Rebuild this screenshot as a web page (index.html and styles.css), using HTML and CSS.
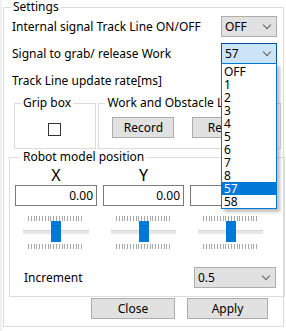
FILE: index.html
```html
<!DOCTYPE html>
<html lang="en">
<head>
    <title>Settings</title>
    <link rel="stylesheet" href="styles.css">
</head>
<body>
    <fieldset class="settings">
        <legend>Settings</legend>

        <div class="row first">
            <span>Internal signal Track Line ON/OFF</span>
            <div class="combo">OFF<span class="chev"></span></div>
        </div>

        <div class="row">
            <span>Signal to grab/ release Work</span>
            <div class="combo open">57<span class="chev"></span>
                <ul class="droplist">
                    <li>OFF</li>
                    <li>1</li>
                    <li>2</li>
                    <li>3</li>
                    <li>4</li>
                    <li>5</li>
                    <li>6</li>
                    <li>7</li>
                    <li>8</li>
                    <li class="selected">57</li>
                    <li>58</li>
                </ul>
            </div>
        </div>

        <div class="row">
            <span>Track Line update rate[ms]</span>
            <div class="textbox"></div>
        </div>

        <div class="groups">
            <fieldset class="grip">
                <legend>Grip box</legend>
                <div class="checkbox"></div>
            </fieldset>
            <fieldset class="work">
                <legend>Work and Obstacle Line</legend>
                <div class="work-buttons">
                    <button class="btn small">Record</button>
                    <button class="btn small">Reset</button>
                </div>
            </fieldset>
        </div>

        <fieldset class="robot">
            <legend>Robot model position</legend>
            <div class="axes">
                <div class="axis">
                    <div class="axis-label">X</div>
                    <div class="value">0.00</div>
                    <div class="slider">
                        <div class="ticks"></div>
                        <div class="track"><div class="thumb"></div></div>
                        <div class="ticks"></div>
                    </div>
                </div>
                <div class="axis">
                    <div class="axis-label">Y</div>
                    <div class="value">0.00</div>
                    <div class="slider">
                        <div class="ticks"></div>
                        <div class="track"><div class="thumb"></div></div>
                        <div class="ticks"></div>
                    </div>
                </div>
                <div class="axis">
                    <div class="axis-label">Z</div>
                    <div class="value">0.00</div>
                    <div class="slider">
                        <div class="ticks"></div>
                        <div class="track"><div class="thumb"></div></div>
                        <div class="ticks"></div>
                    </div>
                </div>
            </div>
            <div class="increment">
                <span>Increment</span>
                <div class="combo wide">0.5<span class="chev"></span></div>
            </div>
        </fieldset>

        <div class="footer">
            <button class="btn close">Close</button>
            <button class="btn apply">Apply</button>
        </div>
    </fieldset>
</body>
</html>
```

FILE: styles.css
```css
body {
    margin: 0;
    background: #fff;
    font-family: "Noto Sans", "Open Sans", sans-serif;
    font-size: 12px;
    color: #000;
    width: 286px;
    height: 331px;
    overflow: hidden;
    border-left: 2px solid #f0f0f0;
    box-sizing: border-box;
}

fieldset {
    border: 1px solid #dcdcdc;
    margin: 0;
    min-width: 0;
}

legend {
    line-height: 14px;
    padding: 0 2px;
}

.settings {
    margin: 0 2px 0 1px;
    padding: 0 2px 8px 1px;
    height: 327px;
    box-sizing: border-box;
}

.settings > legend {
    margin-left: 6px;
}

.row {
    display: flex;
    align-items: center;
    justify-content: space-between;
    height: 21px;
    margin-top: 5px;
    padding: 0 4px 0 7px;
}

.row.first {
    margin-top: 2px;
}

.row + .row {
    margin-top: 6px;
}

.combo {
    position: relative;
    width: 56px;
    height: 21px;
    box-sizing: border-box;
    border: 1px solid #adadad;
    background: #e1e1e1;
    padding-left: 3px;
    line-height: 19px;
}

.combo.open {
    background: #cce4f7;
    border-color: #005499;
}

.combo.wide {
    width: 82px;
}

.chev {
    position: absolute;
    right: 6px;
    top: 5px;
    width: 5px;
    height: 5px;
    border-right: 1px solid #606060;
    border-bottom: 1px solid #606060;
    transform: rotate(45deg);
}

.textbox {
    width: 56px;
    height: 21px;
    box-sizing: border-box;
    border: 1px solid #7a7a7a;
}

.droplist {
    position: absolute;
    left: -1px;
    top: 19px;
    width: 56px;
    box-sizing: border-box;
    margin: 0;
    padding: 1px 0 0;
    list-style: none;
    background: #fff;
    border: 1px solid #0078d7;
    box-shadow: 3px 3px 3px rgba(0, 0, 0, 0.25);
    z-index: 2;
}

.droplist li {
    height: 13px;
    line-height: 13px;
    padding-left: 2px;
}

.droplist li.selected {
    background: #0078d7;
    color: #fff;
}

.groups {
    display: flex;
    gap: 2px;
    margin: 5px 0 0 9px;
}

.groups fieldset {
    height: 53px;
    box-sizing: border-box;
    padding: 0;
}

.groups legend {
    margin-left: 6px;
}

.grip {
    width: 83px;
}

.checkbox {
    width: 13px;
    height: 13px;
    box-sizing: border-box;
    border: 1px solid #333;
    margin: 13px auto 0 33px;
}

.work {
    width: 184px;
}

.work-buttons {
    display: flex;
    gap: 18px;
    margin: 7px 0 0 13px;
}

.btn {
    font-family: inherit;
    font-size: 12px;
    color: #000;
    background: #e1e1e1;
    border: 1px solid #adadad;
    height: 21px;
    padding: 0;
    line-height: 19px;
}

.btn.small {
    width: 62px;
}

.robot {
    margin: 1px 0 0 4px;
    width: 276px;
    height: 147px;
    box-sizing: border-box;
    padding: 0 0 0 5px;
}

.robot > legend {
    margin-left: 6px;
}

.axes {
    display: flex;
    gap: 6px;
}

.axis {
    width: 82px;
}

.axis + .axis {
    width: 81px;
}

.axis-label {
    text-align: center;
    font-size: 16px;
    line-height: 20px;
    height: 20px;
    margin-top: 1px;
}

.value {
    height: 21px;
    box-sizing: border-box;
    border: 1px solid #7a7a7a;
    text-align: right;
    padding-right: 3px;
    line-height: 19px;
}

.slider {
    margin: 10px 8px 0;
}

.ticks {
    height: 5px;
    margin: 0 5px 0 5px;
    background: repeating-linear-gradient(to right, #a7a7a7 0 1px, transparent 1px 2.8px);
}

.ticks:last-child {
    margin-top: 2px;
}

.track {
    position: relative;
    height: 4px;
    margin: 9px 0 10px;
    background: #e7e7e7;
    border-top: 1px solid #d6d6d6;
    box-sizing: border-box;
}

.thumb {
    position: absolute;
    left: 50%;
    top: -10px;
    width: 10px;
    height: 21px;
    margin-left: -5px;
    background: #0078d7;
}

.increment {
    display: flex;
    align-items: center;
    justify-content: space-between;
    margin: 18px 8px 0 9px;
}

.footer {
    display: flex;
    gap: 12px;
    margin: 1px 0 0 86px;
}

.btn.close {
    width: 84px;
}

.btn.apply {
    width: 81px;
}
```
